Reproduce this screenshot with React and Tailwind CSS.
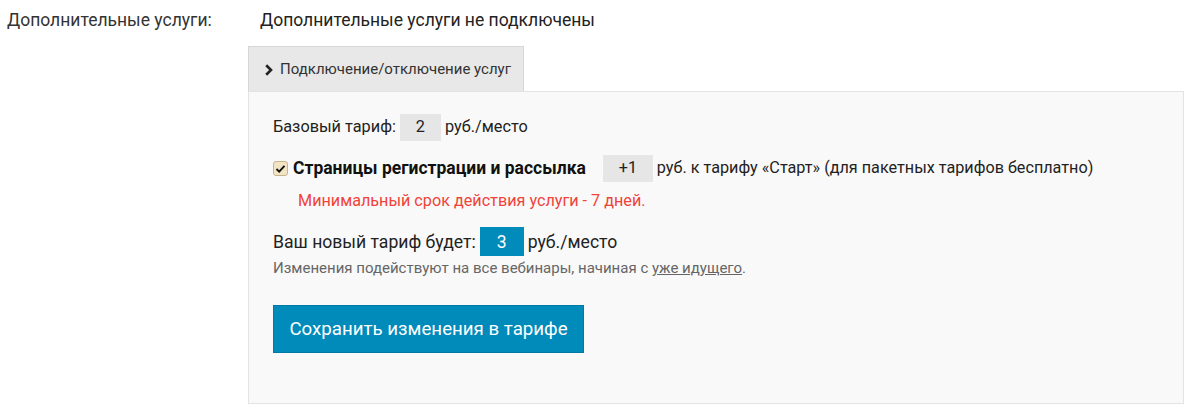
import React from 'react';

export default function App() {
  return (
    <div className="min-h-screen bg-white text-[#222] font-['Roboto',sans-serif]">
      <div className="flex pt-[8px]">
        <div className="w-[248px] pl-[7px] text-[17.5px] leading-[24px] text-[#333]">Дополнительные услуги:</div>
        <div className="w-[936px]">
          <div className="pl-[12px] text-[17.5px] leading-[24px] text-[#222]">Дополнительные услуги не подключены</div>

          {/* вкладка */}
          <div className="mt-[14px] flex">
            <div className="w-[276px] h-[45px] flex items-center gap-[6px] pl-[15px] bg-[#e8e8e8] border border-[#d6d6d6] border-b-0 text-[15px] text-[#333]">
              <svg width="10" height="12" viewBox="0 0 10 12" className="mt-[1px]">
                <path d="M2.2 1.3 L7 6 L2.2 10.7" fill="none" stroke="#222" strokeWidth="2.6" />
              </svg>
              Подключение/отключение услуг
            </div>
          </div>

          {/* панель */}
          <div className="h-[313px] bg-[#f9f9f9] border border-[#e3e3e3] pl-[24px] pt-[22px]">
            <div className="flex items-center text-[16.3px] text-[#222]">
              <span>Базовый тариф:</span>
              <span className="ml-[4px] w-[41px] h-[27px] flex items-center justify-center bg-[#e6e6e6]">2</span>
              <span className="ml-[4px]">руб./место</span>
            </div>

            <div className="mt-[14px] flex items-center">
              <span className="w-[15px] h-[15px] rounded-[3px] border border-[#c7b48c] bg-[#f3e4c4] flex items-center justify-center">
                <svg width="11" height="10" viewBox="0 0 11 10">
                  <path d="M1.5 5 L4.2 7.6 L9.5 1.8" fill="none" stroke="#111" strokeWidth="1.9" />
                </svg>
              </span>
              <span className="ml-[5px] text-[17.5px] font-bold text-[#111]">Страницы регистрации и рассылка</span>
              <span className="ml-[17px] w-[50px] h-[27px] flex items-center justify-center bg-[#e6e6e6] text-[16.2px]">+1</span>
              <span className="ml-[4px] text-[16.2px]">руб. к тарифу «Старт» (для пакетных тарифов бесплатно)</span>
            </div>

            <div className="mt-[7px] pl-[25px] text-[16.2px] text-[#f0433a]">Минимальный срок действия услуги - 7 дней.</div>

            <div className="mt-[14px] flex items-center text-[17.6px] text-[#222]">
              <span>Ваш новый тариф будет:</span>
              <span className="ml-[4px] w-[44px] h-[29px] flex items-center justify-center bg-[#008bbb] text-white">3</span>
              <span className="ml-[4px]">руб./место</span>
            </div>

            <div className="mt-[1px] text-[15px] text-[#666]">
              Изменения подействуют на все вебинары, начиная с <span className="underline">уже идущего</span>.
            </div>

            <button className="mt-[25px] w-[311px] h-[48px] bg-[#008bbb] border border-[#0079a5] text-white text-[18.7px]">
              Сохранить изменения в тарифе
            </button>
          </div>
        </div>
      </div>
    </div>
  );
}
